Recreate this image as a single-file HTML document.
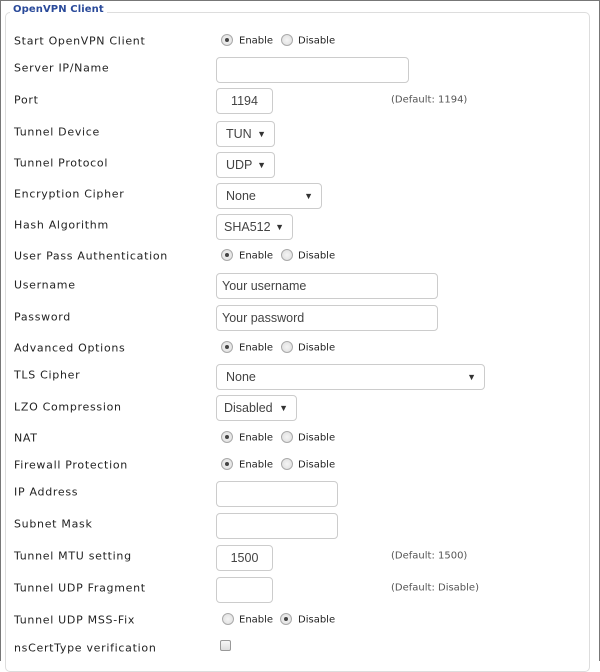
<!DOCTYPE html>
<html><head><meta charset="utf-8"><style>
*{box-sizing:border-box;margin:0;padding:0}
body{width:600px;height:661px;background:#fff;position:relative;overflow:hidden;font-family:"DejaVu Sans","Liberation Sans",sans-serif;font-size:10px;color:#222}
#outer{position:absolute;left:0;top:0;width:600px;height:661px;border:1px solid #777;border-bottom:none}
#fs{position:absolute;left:5px;top:12px;width:585px;height:660px;border:1px solid #ddd;border-radius:5px}
#lg{position:absolute;left:10px;top:4px;background:#fff;padding:0 3px;color:#2a4a9a;font-weight:bold;font-size:10px;letter-spacing:0.1px}
.l{position:absolute;left:14px;transform:translateY(-50%);white-space:nowrap;font-size:11px;letter-spacing:0.7px}
.in{position:absolute;left:216px;height:26px;border:1px solid #ccc;border-radius:4px;font-family:"Liberation Sans",sans-serif;font-size:12.5px;color:#444;padding-left:9px;line-height:24px}
.c{text-align:center;padding-left:0}
.ar{position:absolute;right:8px;top:0;font-size:9px;color:#333}
.r{position:absolute;width:12px;height:12px;border-radius:50%;border:1px solid #aaa;background:radial-gradient(circle,#f4f4f4,#ddd)}
.r.on::after{content:"";position:absolute;left:3px;top:3px;width:4px;height:4px;border-radius:50%;background:#444}
.t{position:absolute;transform:translateY(-50%);white-space:nowrap}
.d{position:absolute;left:391px;transform:translateY(-50%);color:#555;white-space:nowrap}
</style></head><body>
<div id="outer"></div>
<div id="fs"></div>
<div id="lg">OpenVPN Client</div>

<div class="l" style="top:41px">Start OpenVPN Client</div>
<div class="r on" style="left:221px;top:34px"></div><div class="t" style="left:239px;top:41px">Enable</div>
<div class="r" style="left:281px;top:34px"></div><div class="t" style="left:298px;top:41px">Disable</div>

<div class="l" style="top:68px">Server IP/Name</div>
<div class="in" style="top:57px;width:193px"></div>

<div class="l" style="top:100px">Port</div>
<div class="in c" style="top:88px;width:57px">1194</div>
<div class="d" style="top:100px">(Default: 1194)</div>

<div class="l" style="top:132px">Tunnel Device</div>
<div class="in" style="top:121px;width:59px">TUN<span class="ar">▼</span></div>

<div class="l" style="top:163px">Tunnel Protocol</div>
<div class="in" style="top:152px;width:59px">UDP<span class="ar">▼</span></div>

<div class="l" style="top:194px">Encryption Cipher</div>
<div class="in" style="top:183px;width:106px">None<span class="ar">▼</span></div>

<div class="l" style="top:225px">Hash Algorithm</div>
<div class="in" style="top:214px;width:77px;padding-left:7px">SHA512<span class="ar">▼</span></div>

<div class="l" style="top:256px">User Pass Authentication</div>
<div class="r on" style="left:221px;top:249px"></div><div class="t" style="left:239px;top:256px">Enable</div>
<div class="r" style="left:281px;top:249px"></div><div class="t" style="left:298px;top:256px">Disable</div>

<div class="l" style="top:285px">Username</div>
<div class="in" style="top:273px;width:222px;padding-left:5px">Your username</div>

<div class="l" style="top:317px">Password</div>
<div class="in" style="top:305px;width:222px;padding-left:5px">Your password</div>

<div class="l" style="top:348px">Advanced Options</div>
<div class="r on" style="left:221px;top:341px"></div><div class="t" style="left:239px;top:348px">Enable</div>
<div class="r" style="left:281px;top:341px"></div><div class="t" style="left:298px;top:348px">Disable</div>

<div class="l" style="top:375px">TLS Cipher</div>
<div class="in" style="top:364px;width:269px">None<span class="ar">▼</span></div>

<div class="l" style="top:407px">LZO Compression</div>
<div class="in" style="top:395px;width:81px;padding-left:7px">Disabled<span class="ar">▼</span></div>

<div class="l" style="top:438px">NAT</div>
<div class="r on" style="left:221px;top:431px"></div><div class="t" style="left:239px;top:438px">Enable</div>
<div class="r" style="left:281px;top:431px"></div><div class="t" style="left:298px;top:438px">Disable</div>

<div class="l" style="top:465px">Firewall Protection</div>
<div class="r on" style="left:221px;top:458px"></div><div class="t" style="left:239px;top:465px">Enable</div>
<div class="r" style="left:281px;top:458px"></div><div class="t" style="left:298px;top:465px">Disable</div>

<div class="l" style="top:492px">IP Address</div>
<div class="in" style="top:481px;width:122px"></div>

<div class="l" style="top:524px">Subnet Mask</div>
<div class="in" style="top:513px;width:122px"></div>

<div class="l" style="top:556px">Tunnel MTU setting</div>
<div class="in c" style="top:545px;width:57px">1500</div>
<div class="d" style="top:556px">(Default: 1500)</div>

<div class="l" style="top:588px">Tunnel UDP Fragment</div>
<div class="in" style="top:577px;width:57px"></div>
<div class="d" style="top:588px">(Default: Disable)</div>

<div class="l" style="top:620px">Tunnel UDP MSS-Fix</div>
<div class="r" style="left:222px;top:613px"></div><div class="t" style="left:239px;top:620px">Enable</div>
<div class="r on" style="left:280px;top:613px"></div><div class="t" style="left:298px;top:620px">Disable</div>

<div class="l" style="top:648px">nsCertType verification</div>
<div style="position:absolute;left:220px;top:640px;width:11px;height:11px;border:1px solid #999;border-radius:2px;background:linear-gradient(#f6f6f6,#ddd)"></div>
</body></html>
